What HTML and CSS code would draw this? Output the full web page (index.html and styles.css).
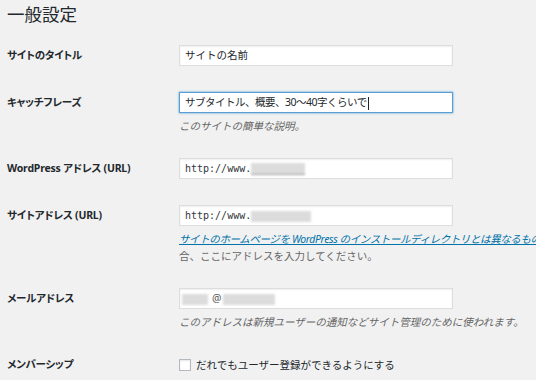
FILE: index.html
```html
<!DOCTYPE html>
<html lang="ja">
<head>
    <meta charset="UTF-8">
    <title>一般設定</title>
    <link rel="stylesheet" href="styles.css">
</head>
<body>
    <div class="wrap">
        <h1>一般設定</h1>

        <div class="row">
            <div class="label">サイトのタイトル</div>
            <div class="cell"><div class="field">サイトの名前</div></div>
        </div>

        <div class="row has-desc">
            <div class="label">キャッチフレーズ</div>
            <div class="cell">
                <div class="field focus">サブタイトル、概要、30〜40字くらいで<span class="caret"></span></div>
                <p class="desc">このサイトの簡単な説明。</p>
            </div>
        </div>

        <div class="row">
            <div class="label">WordPress アドレス (URL)</div>
            <div class="cell"><div class="field mono">http://www.<span class="blur b1"></span></div></div>
        </div>

        <div class="row has-desc">
            <div class="label">サイトアドレス (URL)</div>
            <div class="cell">
                <div class="field mono">http://www.<span class="blur b2"></span></div>
                <p class="desc"><a href="#">サイトのホームページを WordPress のインストールディレクトリとは異なるものにしたい場</a></p>
                <p class="desc plain">合、ここにアドレスを入力してください。</p>
            </div>
        </div>

        <div class="row has-desc">
            <div class="label">メールアドレス</div>
            <div class="cell">
                <div class="field mail"><span class="blur b3"></span>@<span class="blur b4"></span></div>
                <p class="desc">このアドレスは新規ユーザーの通知などサイト管理のために使われます。</p>
            </div>
        </div>

        <div class="row">
            <div class="label">メンバーシップ</div>
            <div class="cell">
                <label class="check"><span class="box"></span>だれでもユーザー登録ができるようにする</label>
            </div>
        </div>
    </div>
</body>
</html>
```

FILE: styles.css
```css
body { margin: 0; background: #f1f1f1; color: #23282d; font-family: "Noto Sans", "Noto Sans CJK JP", sans-serif; font-size: 10.5px; overflow: hidden; }
.wrap { padding-left: 7px; }
h1 { margin: 0 0 4px; font-size: 17.5px; font-weight: 400; line-height: 28px; }
.row { display: grid; grid-template-columns: 172px 274px; padding: 13px 0; }
.row.has-desc { padding-bottom: 10px; }
.label { font-weight: 700; line-height: 21px; white-space: nowrap; font-feature-settings: "palt"; letter-spacing: -0.2px; }
.field { height: 21px; box-sizing: border-box; border: 1px solid #ddd; background: #fff; padding: 0 5px; line-height: 19px; box-shadow: inset 0 1px 2px rgba(0,0,0,0.07); white-space: nowrap; }
.field.focus { border-color: #5b9dd9; box-shadow: 0 0 2px rgba(30,140,190,0.8); letter-spacing: -0.5px; }
.caret { display: inline-block; width: 1px; height: 13px; background: #222; vertical-align: middle; margin-left: 1px; }
.mono { font-family: "DejaVu Sans Mono", monospace; font-size: 10px; color: #32373c; }
.blur { display: inline-block; height: 11px; vertical-align: middle; background: #dcdcdc; filter: blur(1px); }
.b1 { width: 54px; border-bottom: 1px solid #999; }
.b2 { width: 60px; }
.b3 { width: 26px; margin-left: -3px; margin-right: 4px; }
.b4 { width: 52px; margin-left: 2px; }
.mail { color: #555; }
.desc { margin: 5px 0 0; line-height: 17px; color: #666; font-style: italic; white-space: nowrap; }
.desc + .desc { margin-top: 0; }
.desc.plain { font-style: normal; }
.desc a { color: #0073aa; letter-spacing: -0.4px; }
.check { display: flex; align-items: center; gap: 5px; height: 21px; }
.box { width: 12px; height: 12px; box-sizing: border-box; border: 1px solid #b4b9be; background: #fff; box-shadow: inset 0 1px 2px rgba(0,0,0,0.1); }
```
